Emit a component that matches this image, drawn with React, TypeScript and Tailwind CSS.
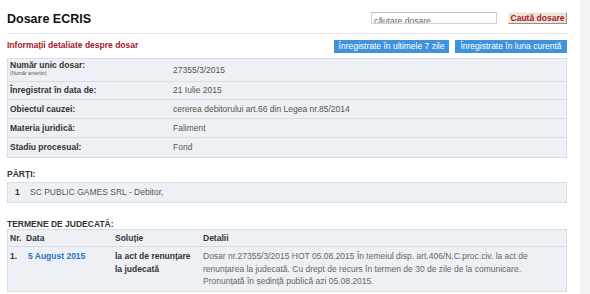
import React from "react";

const rows: { label: string; sub?: string; value: string; h: string }[] = [
  { label: "Număr unic dosar:", sub: "(Număr anterior)", value: "27355/3/2015", h: "h-[23px]" },
  { label: "Înregistrat în data de:", value: "21 Iulie 2015", h: "h-[18px]" },
  { label: "Obiectul cauzei:", value: "cererea debitorului art.66 din Legea nr.85/2014", h: "h-[19px]" },
  { label: "Materia juridică:", value: "Faliment", h: "h-[19px]" },
  { label: "Stadiu procesual:", value: "Fond", h: "h-[19px]" },
];

export default function App() {
  return (
    <div className="flex w-[590px] h-[294px] overflow-hidden bg-white font-['Liberation_Sans',Arial,sans-serif] text-[8.5px] text-[#333]">
      <div className="w-[580px] pl-[7px] pr-[13px]">
        {/* header */}
        <div className="flex justify-between h-[34px] border-b border-[#e6e6e6] pt-[12px]">
          <h1 className="text-[12.5px] leading-[15px] font-bold text-[#111]">Dosare ECRIS</h1>
          <div className="flex items-start gap-[11px]">
            <div className="w-[126px] h-[12px] border border-[#d2d2d2] border-t-[#bcbcbc] bg-white overflow-hidden pl-[2px] pt-[3px] leading-[10px] text-[#666]">
              căutare dosare
            </div>
            <div className="w-[59px] h-[12px] border border-[#f7f4ee] border-r-[#8f8f8f] border-b-[#8f8f8f] bg-[#ece5d6] text-[#a8161c] font-bold leading-[10px] text-center">
              Caută dosare
            </div>
          </div>
        </div>

        {/* subheader */}
        <div className="mt-[6px] flex justify-between items-start h-[13px]">
          <div className="leading-[11px] font-bold text-[#a3152c]">Informații detaliate despre dosar</div>
          <div className="flex gap-[6px]">
            <div className="w-[115px] h-[13px] bg-[#3f93db] text-white leading-[13px] text-center">
              Înregistrate în ultimele 7 zile
            </div>
            <div className="w-[112px] h-[13px] bg-[#3f93db] text-white leading-[13px] text-center">
              Înregistrate în luna curentă
            </div>
          </div>
        </div>

        {/* details table */}
        <div className="mt-[5px] border border-[#d5dde6] bg-[#edf1f6] divide-y divide-[#d5dde6]">
          {rows.map((r, i) => (
            <div key={i} className={`grid grid-cols-[165px_1fr] ${r.h}`}>
              {r.sub ? (
                <div className="pl-[2px] pt-[2px]">
                  <div className="font-bold leading-[9px]">{r.label}</div>
                  <div className="text-[5px] leading-[6px] text-[#555]">{r.sub}</div>
                </div>
              ) : (
                <div className="pl-[2px] flex items-center font-bold">{r.label}</div>
              )}
              <div className="flex items-center text-[#555]">{r.value}</div>
            </div>
          ))}
        </div>

        {/* parties */}
        <div className="mt-[11px] leading-[10px] font-bold">PĂRȚI:</div>
        <div className="mt-[3px] h-[21px] border border-[#d5dde6] bg-[#edf1f6] flex items-center">
          <span className="pl-[7px] w-[22px] font-bold">1</span>
          <span className="text-[#555]">SC PUBLIC GAMES SRL - Debitor,</span>
        </div>

        {/* hearings */}
        <div className="mt-[16px] leading-[10px] font-bold">TERMENE DE JUDECATĂ:</div>
        <div className="border border-[#d5dde6] bg-[#edf1f6] divide-y divide-[#d5dde6]">
          <div className="grid grid-cols-[18px_89px_88px_1fr] h-[17px] items-center font-bold">
            <div className="pl-[2px]">Nr.</div>
            <div>Data</div>
            <div>Soluție</div>
            <div>Detalii</div>
          </div>
          <div className="grid grid-cols-[18px_89px_88px_1fr] h-[44px] pt-[3px] leading-[12.5px]">
            <div className="pl-[2px] font-bold">1.</div>
            <div className="pl-[2px] font-bold text-[#2a72c3]">5 August 2015</div>
            <div className="font-bold whitespace-nowrap">
              la act de renunțare
              <br />
              la judecată
            </div>
            <div className="text-[#666] whitespace-nowrap">
              Dosar nr.27355/3/2015 HOT 05.08.2015 În temeiul disp. art.406/N.C.proc.civ. la act de
              <br />
              renunțarea la judecată. Cu drept de recurs în termen de 30 de zile de la comunicare.
              <br />
              Pronunțată în ședință publică azi 05.08.2015.
            </div>
          </div>
        </div>
      </div>
      <div className="w-[10px] h-full bg-[#f2f2f2]" />
    </div>
  );
}
